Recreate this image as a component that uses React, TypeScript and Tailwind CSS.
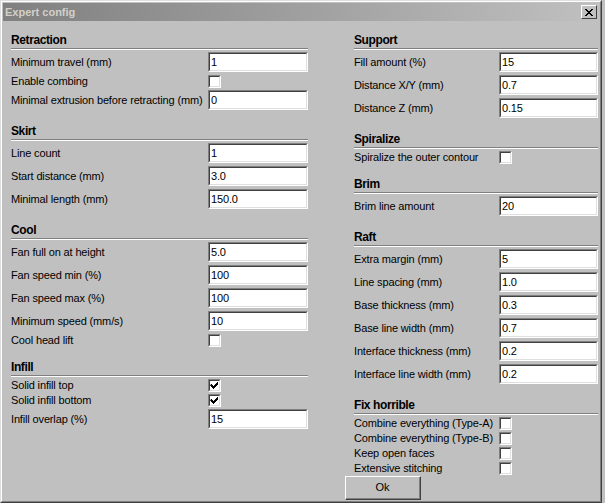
type Row =
  | { kind: 'text'; label: string; value: string }
  | { kind: 'check'; label: string; checked?: boolean };

type Section = { title: string; rows: Row[] };

const LEFT: Section[] = [
  {
    title: 'Retraction',
    rows: [
      { kind: 'text', label: 'Minimum travel (mm)', value: '1' },
      { kind: 'check', label: 'Enable combing' },
      { kind: 'text', label: 'Minimal extrusion before retracting (mm)', value: '0' },
    ],
  },
  {
    title: 'Skirt',
    rows: [
      { kind: 'text', label: 'Line count', value: '1' },
      { kind: 'text', label: 'Start distance (mm)', value: '3.0' },
      { kind: 'text', label: 'Minimal length (mm)', value: '150.0' },
    ],
  },
  {
    title: 'Cool',
    rows: [
      { kind: 'text', label: 'Fan full on at height', value: '5.0' },
      { kind: 'text', label: 'Fan speed min (%)', value: '100' },
      { kind: 'text', label: 'Fan speed max (%)', value: '100' },
      { kind: 'text', label: 'Minimum speed (mm/s)', value: '10' },
      { kind: 'check', label: 'Cool head lift' },
    ],
  },
  {
    title: 'Infill',
    rows: [
      { kind: 'check', label: 'Solid infill top', checked: true },
      { kind: 'check', label: 'Solid infill bottom', checked: true },
      { kind: 'text', label: 'Infill overlap (%)', value: '15' },
    ],
  },
];

const RIGHT: Section[] = [
  {
    title: 'Support',
    rows: [
      { kind: 'text', label: 'Fill amount (%)', value: '15' },
      { kind: 'text', label: 'Distance X/Y (mm)', value: '0.7' },
      { kind: 'text', label: 'Distance Z (mm)', value: '0.15' },
    ],
  },
  {
    title: 'Spiralize',
    rows: [{ kind: 'check', label: 'Spiralize the outer contour' }],
  },
  {
    title: 'Brim',
    rows: [{ kind: 'text', label: 'Brim line amount', value: '20' }],
  },
  {
    title: 'Raft',
    rows: [
      { kind: 'text', label: 'Extra margin (mm)', value: '5' },
      { kind: 'text', label: 'Line spacing (mm)', value: '1.0' },
      { kind: 'text', label: 'Base thickness (mm)', value: '0.3' },
      { kind: 'text', label: 'Base line width (mm)', value: '0.7' },
      { kind: 'text', label: 'Interface thickness (mm)', value: '0.2' },
      { kind: 'text', label: 'Interface line width (mm)', value: '0.2' },
    ],
  },
  {
    title: 'Fix horrible',
    rows: [
      { kind: 'check', label: 'Combine everything (Type-A)' },
      { kind: 'check', label: 'Combine everything (Type-B)' },
      { kind: 'check', label: 'Keep open faces' },
      { kind: 'check', label: 'Extensive stitching' },
    ],
  },
];

function Sunken({ className, children }: { className: string; children?: React.ReactNode }) {
  // classic 2px sunken edge
  return (
    <div className={`border border-t-[#808080] border-l-[#808080] border-b-white border-r-white ${className}`}>
      <div className="h-full w-full border border-t-[#404040] border-l-[#404040] border-b-[#dfdfdf] border-r-[#dfdfdf] bg-white">
        {children}
      </div>
    </div>
  );
}

function FormRow({ row, labelW }: { row: Row; labelW: string }) {
  if (row.kind === 'text') {
    return (
      <div className="flex h-[20px] items-center">
        <span className={`${labelW} shrink-0 whitespace-nowrap`}>{row.label}</span>
        <Sunken className="h-[20px] flex-1">
          <div className="flex h-full items-center pl-[1px] text-black">{row.value}</div>
        </Sunken>
      </div>
    );
  }
  return (
    <div className="flex h-[12px] items-center">
      <span className={`${labelW} shrink-0 whitespace-nowrap`}>{row.label}</span>
      <Sunken className="h-[13px] w-[13px] shrink-0">
        {row.checked && (
          <svg width="9" height="9" viewBox="0 0 9 9" className="block">
            <path d="M1 3h1v1h1v1h1v-1h1v-1h1v-1h1v-1h1v3h-1v1h-1v1h-1v1h-1v1h-1v-1h-1v-1h-1v-1h-1z" fill="#000" />
          </svg>
        )}
      </Sunken>
    </div>
  );
}

function Group({ section, labelW }: { section: Section; labelW: string }) {
  return (
    <div className="flex flex-col">
      <div className="flex h-[17px] items-center text-[12px] font-bold tracking-[-0.4px] text-black">{section.title}</div>
      <div className="h-[2px] border-t border-b border-t-[#808080] border-b-white" />
      <div className="mt-[2px] flex flex-col gap-[3px]">
        {section.rows.map((r) => (
          <FormRow key={r.label} row={r} labelW={labelW} />
        ))}
      </div>
    </div>
  );
}

export default function App() {
  return (
    <div
      className="h-[503px] w-[605px] overflow-hidden bg-[#c0c0c0] text-[11px] tracking-[-0.15px] text-black"
      style={{ fontFamily: '"Liberation Sans", Arial, sans-serif' }}
    >
      <div className="h-[503px] w-[602px] border border-t-[#dfdfdf] border-l-[#dfdfdf] border-b-[#404040] border-r-[#404040]">
        <div className="flex h-full flex-col border border-t-white border-l-white border-b-[#808080] border-r-[#808080] p-[1px]">
          {/* Title bar */}
          <div className="flex h-[18px] shrink-0 items-center justify-between bg-gradient-to-r from-[#808080] to-[#c0c0c0] pl-[2px] pr-[2px]">
            <span className="text-[11px] font-bold tracking-normal text-[#d4d0c8]">Expert config</span>
            <button className="flex h-[14px] w-[16px] items-center justify-center border border-t-white border-l-white border-b-[#404040] border-r-[#404040] bg-[#c0c0c0]">
              <svg width="8" height="7" viewBox="0 0 8 7">
                <path d="M0 0h2v1h1v1h2v-1h1v-1h2v1h-1v1h-1v1h-1v1h1v1h1v1h1v1h-2v-1h-1v-1h-2v1h-1v1h-2v-1h1v-1h1v-1h1v-1h-1v-1h-1v-1h-1z" fill="#000" />
              </svg>
            </button>
          </div>

          {/* Body */}
          <div className="flex flex-1 pl-[8px] pt-[10px]">
            <div className="flex w-[297px] flex-col gap-[12px]">
              {LEFT.map((s) => (
                <Group key={s.title} section={s} labelW="w-[197px]" />
              ))}
            </div>
            <div className="ml-[46px] flex w-[244px] flex-col">
              <div className="flex flex-col gap-[12px]">
                {RIGHT.map((s) => (
                  <Group key={s.title} section={s} labelW="w-[145px]" />
                ))}
              </div>
              <button className="-ml-[9px] mt-[2px] h-[24px] w-[76px] border border-t-white border-l-white border-b-[#404040] border-r-[#404040] bg-[#c0c0c0]">
                <div className="flex h-full items-center justify-center border-b border-r border-b-[#808080] border-r-[#808080]">Ok</div>
              </button>
            </div>
          </div>
        </div>
      </div>
    </div>
  );
}
